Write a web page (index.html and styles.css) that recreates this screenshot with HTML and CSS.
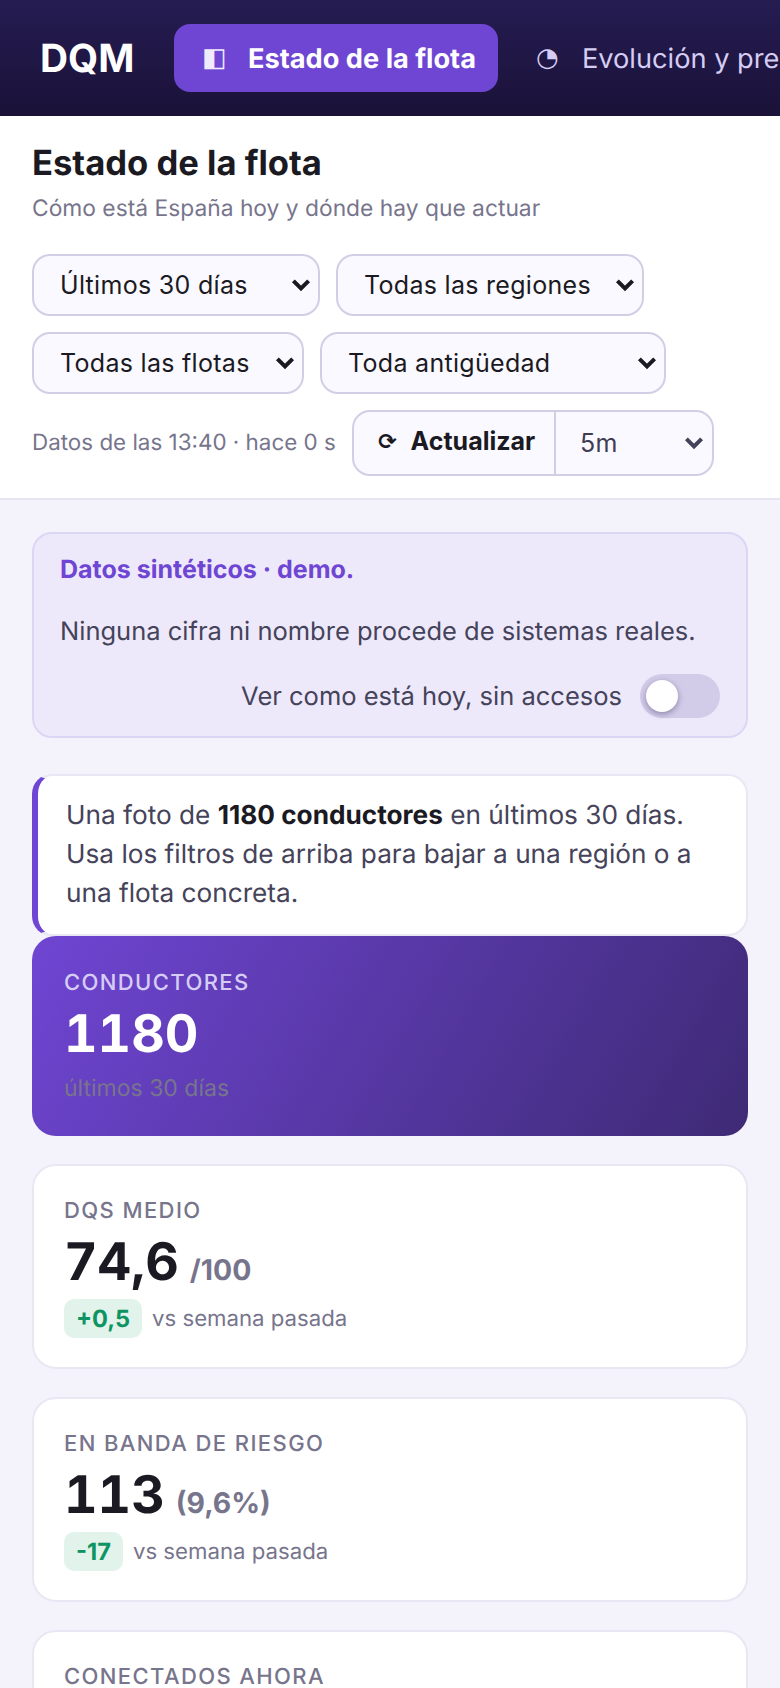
FILE: index.html
```html
<!DOCTYPE html>
<html lang="es">
<head>
<meta charset="utf-8">
<title>DQM · Estado de la flota</title>
<link rel="stylesheet" href="styles.css">
</head>
<body>
<div class="app">
  <header class="topbar">
    <div class="logo">DQM</div>
    <nav class="nav">
      <a class="nav-item active"><span class="nav-icon">◧</span><span>Estado de la flota</span></a>
      <a class="nav-item"><span class="nav-icon">◔</span><span>Evolución y pre</span></a>
    </nav>
  </header>
  <section class="subhead">
    <h1 class="title">Estado de la flota</h1>
    <p class="subtitle">Cómo está España hoy y dónde hay que actuar</p>
    <div class="filters">
      <select class="filter w-period"><option>Últimos 30 días</option></select>
      <select class="filter w-region"><option>Todas las regiones</option></select>
      <select class="filter w-fleet"><option>Todas las flotas</option></select>
      <select class="filter w-age"><option>Toda antigüedad</option></select>
      <span class="stamp">Datos de las 13:40 · hace 0 s</span>
      <div class="refresh">
        <button class="refresh-btn"><span class="refresh-icon">⟳</span>Actualizar</button>
        <select class="refresh-select"><option>5m</option></select>
      </div>
    </div>
  </section>
  <main class="content">
    <section class="banner">
      <p class="banner-title">Datos sintéticos · demo.</p>
      <p class="banner-text">Ninguna cifra ni nombre procede de sistemas reales.</p>
      <div class="banner-toggle">
        <span>Ver como está hoy, sin accesos</span>
        <span class="switch"><span class="knob"></span></span>
      </div>
    </section>
    <div class="stack">
      <p class="insight">Una foto de <strong>1180 conductores</strong> en últimos 30 días. Usa los filtros de arriba para bajar a una región o a una flota concreta.</p>
      <article class="hero">
        <div class="kpi-label">CONDUCTORES</div>
        <div class="kpi-value">1180</div>
        <div class="hero-note">últimos 30 días</div>
      </article>
    </div>
    <article class="kpi">
      <div class="kpi-label">DQS MEDIO</div>
      <div class="kpi-value">74,6 <small>/100</small></div>
      <div class="kpi-delta"><span class="chip">+0,5</span><span>vs semana pasada</span></div>
    </article>
    <article class="kpi">
      <div class="kpi-label">EN BANDA DE RIESGO</div>
      <div class="kpi-value">113 <small>(9,6%)</small></div>
      <div class="kpi-delta"><span class="chip">-17</span><span>vs semana pasada</span></div>
    </article>
    <article class="kpi">
      <div class="kpi-label">CONECTADOS AHORA</div>
    </article>
  </main>
</div>
</body>
</html>
```
FILE: styles.css
```css
* { box-sizing: border-box; }
html, body { margin: 0; padding: 0; }
body { font-family: Inter, "Noto Sans", sans-serif; background: #f4f3fc; color: #1b1a22; text-rendering: geometricPrecision; }
.app { zoom: 2; width: 390px; height: 844px; overflow: hidden; }

.topbar { height: 58px; display: flex; align-items: center; padding-left: 20px; background: linear-gradient(180deg, #251c52 0%, #1a1238 100%); overflow: hidden; }
.logo { font-size: 19.4px; font-weight: 700; color: #fff; width: 67px; flex: none; }
.nav { display: flex; align-items: center; gap: 5px; flex: none; }
.nav-item { display: flex; align-items: center; height: 34px; padding: 0 11px; border-radius: 8px; font-size: 13.6px; color: #d6cdf4; white-space: nowrap; }
.nav-item.active { background: #6f45d3; color: #fff; font-weight: 700; }
.nav-icon { font-family: "DejaVu Sans", sans-serif; font-size: 13px; font-weight: 400; width: 26px; padding-left: 3px; flex: none; }
.active .nav-icon { color: #efeafc; }

.subhead { background: #fff; padding: 13px 16px 0; border-bottom: 1px solid #e7e5f2; height: 192px; }
.title { margin: 0; font-size: 17.3px; line-height: 20px; font-weight: 700; padding-top: 0.5px; }
.subtitle { margin: 5px 0 0; font-size: 11.4px; line-height: 16px; color: #77758c; }
.filters { display: flex; flex-wrap: wrap; align-items: center; gap: 8px; margin-top: 14.5px; }
.filter, .refresh-select {
  appearance: none;
  font-family: Inter, sans-serif;
  font-size: 12.5px;
  letter-spacing: 0.15px;
  background-repeat: no-repeat;
  background-size: 10px 7px;
}
.filter {
  height: 31px;
  border: 1px solid #d2cee6;
  border-radius: 9px;
  color: #1b1a22;
  padding: 0 18px 0 13px;
  background-color: #faf9ff;
  background-position: right 3.5px center;
  background-image: url("data:image/svg+xml,%3Csvg xmlns='http://www.w3.org/2000/svg' viewBox='0 0 10 7'%3E%3Cpath d='M1.2 1.4 5 5.2 8.8 1.4' fill='none' stroke='%231b1a22' stroke-width='2'/%3E%3C/svg%3E");
}
.w-period { width: 144px; }
.w-region { width: 154px; }
.w-fleet { width: 136px; }
.w-age { width: 173px; }
.stamp { font-size: 11.2px; color: #77758c; white-space: nowrap; width: 160px; margin-right: -8px; padding-bottom: 1px; }
.refresh { display: flex; width: 181px; height: 33px; border: 1px solid #d2cee6; border-radius: 9px; background: #faf9ff; overflow: hidden; }
.refresh-btn { width: 101px; flex: none; border: 0; border-right: 1px solid #d2cee6; background: transparent; font-family: Inter, sans-serif; font-size: 12.5px; font-weight: 700; color: #1b1a22; padding: 0 0 2px 2.7px; display: flex; align-items: center; justify-content: center; }
.refresh-icon { font-family: "DejaVu Sans", sans-serif; font-size: 11px; margin-right: 7px; }
.refresh-select {
  flex: 1;
  border: 0;
  color: #3f3d52;
  padding: 0 18px 0 12px;
  background-color: transparent;
  background-position: right 4px center;
  background-image: url("data:image/svg+xml,%3Csvg xmlns='http://www.w3.org/2000/svg' viewBox='0 0 10 7'%3E%3Cpath d='M1.2 1.4 5 5.2 8.8 1.4' fill='none' stroke='%2345435a' stroke-width='2'/%3E%3C/svg%3E");
}

.content { padding: 16px 16px 0; display: flex; flex-direction: column; gap: 14px; }
.banner { height: 103px; padding: 9px 13px; background: #ede9fb; border: 1px solid #dcd6f5; border-radius: 10px; }
.banner-title { margin: 0; font-size: 12.5px; line-height: 18px; font-weight: 700; color: #6f45d3; }
.banner-text { margin: 13px 0 0; font-size: 12.75px; line-height: 18px; color: #45435a; }
.banner-toggle { display: flex; justify-content: flex-end; align-items: center; gap: 9px; margin-top: 12px; font-size: 12.75px; color: #45435a; }
.switch { width: 40px; height: 22px; border-radius: 11px; background: #d3cce9; display: flex; align-items: center; padding-left: 3px; }
.knob { width: 16px; height: 16px; border-radius: 50%; background: #fff; box-shadow: 0 1px 3px rgba(30, 20, 70, 0.4); }

.stack { display: flex; flex-direction: column; margin-top: 4px; }
.insight { margin: 0; height: 81px; padding: 10px 12px 0 14px; background: #fff; border: 1px solid #e9e7f3; border-left: 3px solid #6f45d3; border-radius: 10px; font-size: 13.1px; line-height: 19.5px; color: #45435a; }
.insight strong { color: #1b1a22; font-weight: 700; }
.hero { height: 100px; padding: 15.5px 16px; border-radius: 12px; background: linear-gradient(120deg, #6f45d3 0%, #3e2a75 100%); }
.kpi { height: 102.5px; padding: 14.5px 15px; background: #fff; border: 1px solid #e9e7f3; border-radius: 12px; }
.kpi-label { font-size: 11px; line-height: 16px; font-weight: 500; letter-spacing: 0.7px; color: #77758c; }
.hero .kpi-label { color: #d6cdf4; }
.kpi-value { margin-top: 0.5px; font-size: 26px; line-height: 34px; font-weight: 700; color: #1b1a22; white-space: nowrap; font-variant-numeric: tabular-nums; }
.kpi-value small { margin-left: -1.5px; font-size: 14.2px; color: #77758c; font-weight: 700; font-variant-numeric: normal; }
.hero .kpi-value { color: #fff; }
.hero-note { margin-top: 2px; font-size: 11.5px; line-height: 16px; color: #77758c; }
.kpi-delta { display: flex; align-items: center; gap: 5px; margin-top: -2.5px; font-size: 11.1px; color: #77758c; }
.chip { padding: 0 6px; height: 19.5px; line-height: 19.5px; border-radius: 5px; background: #e1f3ea; color: #0e9462; font-weight: 700; font-size: 11.8px; }
```
